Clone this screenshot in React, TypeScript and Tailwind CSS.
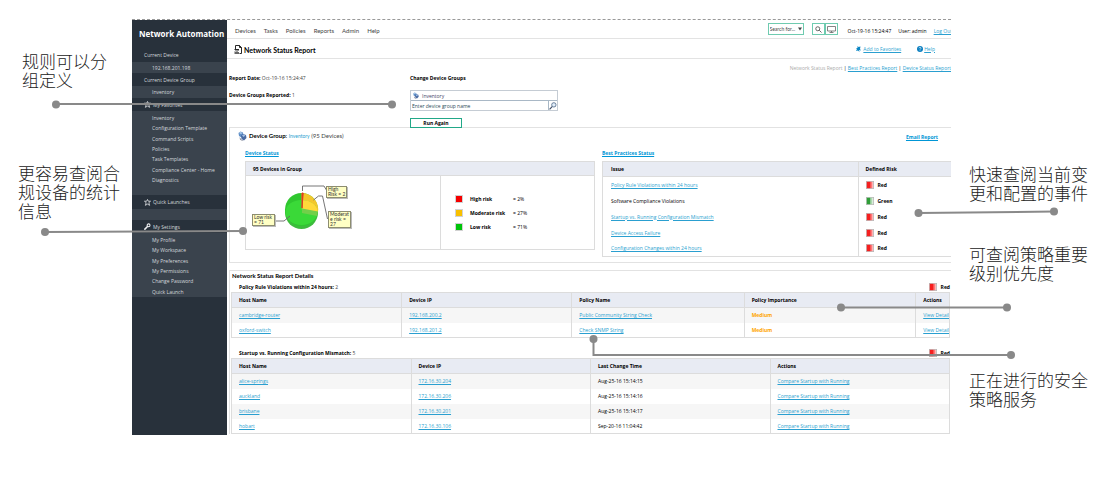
import React from "react";

const navLink = "text-[#d5d9dd] no-underline";
const link = "text-[#2a9fd0] underline";
const strongLink = "font-bold text-[#0096d6] underline";

function StarIcon() {
  return (
    <svg viewBox="0 0 12 12" className="h-[7px] w-[7px]" fill="none" stroke="#e8ebee" strokeWidth="1.3" aria-hidden="true">
      <path d="M6 .8l1.4 3h3.8L8.3 6.3l1.3 4.6L6 8.7l-3.600 2.200 1.300-4.600L.8 3.800h3.800z" />
    </svg>
  );
}

function WrenchIcon() {
  return (
    <svg viewBox="0 0 12 12" className="h-[7px] w-[7px]" aria-hidden="true">
      <path d="M1.500 10.500L6 6" stroke="#eef0f2" strokeWidth="2.600" strokeLinecap="round" />
      <circle cx="7.800" cy="4" r="2.500" fill="none" stroke="#eef0f2" strokeWidth="1.800" />
    </svg>
  );
}

function GroupIcon({ className }: { className: string }) {
  return (
    <svg viewBox="0 0 18 20" className={className} aria-hidden="true">
      <path d="M1 4l4-3 5 2 1 6-4 4-5-3z" fill="#5f8fc7" />
      <path d="M2 4l3-2 4 2-3 2z" fill="#b5d0ec" />
      <path d="M6 9l4-3 6 2 1 6-5 5-5-3z" fill="#4a6ba3" />
      <path d="M8 9l3-2 4 2-4 3z" fill="#a3c0e6" />
      <path d="M3 12l4 5 4 2-3 .500-4-2z" fill="#8a8fa0" />
    </svg>
  );
}

function ReportIcon() {
  return (
    <svg viewBox="0 0 16 18" className="h-[9px] w-[8px]" fill="none" stroke="#111" strokeWidth="1.800" aria-hidden="true">
      <path d="M3 8V1h8l4 4v12h-4" />
      <path d="M11 1v4h4" />
      <path d="M1 9h9M2 13l2-2 2 2 3-3" />
      <path d="M1 16h9" strokeWidth="2.600" />
    </svg>
  );
}

function RiskMark({ level }: { level: "Red" | "Green" }) {
  const red = level === "Red";
  return (
    <span className="flex items-center gap-[4px] font-bold text-black">
      <svg viewBox="0 0 16 16" className="h-[8px] w-[8px] shrink-0" aria-hidden="true">
        <rect x=".8" y=".8" width="14.400" height="14.400" fill={red ? "#ffb3b3" : "#d8ecd8"} stroke="#b9b9b9" strokeWidth="1.600" />
        <rect x="1.600" y="1.600" width="6.400" height="12.800" fill={red ? "#f51f1f" : "#2f9e38"} />
        <rect x="8" y="1.600" width="3.200" height="12.800" fill={red ? "#fb5454" : "#8fcb93"} />
      </svg>
      {level}
    </span>
  );
}

function NavHead({ children, icon, className }: { children: React.ReactNode; icon?: React.ReactNode; className: string }) {
  return (
    <h2 className={`flex items-center gap-[2px] bg-[#28313b] pl-[12px] ${className}`}>
      {icon}
      {children}
    </h2>
  );
}

function NavList({ items, className }: { items: string[]; className: string }) {
  return (
    <ul className={`grid auto-rows-fr items-center bg-[#3a434d] pl-[20px] ${className}`}>
      {items.map((t) => (
        <li key={t}>
          <a href="#" className={navLink}>{t}</a>
        </li>
      ))}
    </ul>
  );
}

function Sidebar() {
  return (
    <nav className="w-[95px] shrink-0 bg-[#28313b] text-[5px] leading-[6px] text-[#d5d9dd]">
      <h1 className="flex h-[28px] items-center pl-[7px] text-[8px] leading-[10px] font-bold whitespace-nowrap text-white">Network Automation</h1>
      <NavHead className="h-[14px]">Current Device</NavHead>
      <NavList className="h-[11px]" items={["192.168.201.198"]} />
      <NavHead className="h-[13px]">Current Device Group</NavHead>
      <NavList className="h-[12px]" items={["Inventory"]} />
      <NavHead className="h-[13px]" icon={<StarIcon />}>My Favorites</NavHead>
      <NavList
        className="h-[84px] pt-[2px] pb-[10px]"
        items={["Inventory", "Configuration Template", "Command Scripts", "Policies", "Task Templates", "Compliance Center - Home", "Diagnostics"]}
      />
      <NavHead className="h-[14px]" icon={<StarIcon />}>Quick Launches</NavHead>
      <div className="h-[11px] bg-[#3a434d]" />
      <NavHead className="h-[13px]" icon={<WrenchIcon />}>My Settings</NavHead>
      <NavList
        className="h-[64px] pt-[2px]"
        items={["My Profile", "My Workspace", "My Preferences", "My Permissions", "Change Password", "Quick Launch"]}
      />
    </nav>
  );
}

function TopBar() {
  return (
    <header className="flex h-[19px] items-center justify-between border-b border-[#e3e3e3] pl-[8px]">
      <div className="flex gap-[8px] pt-[4px] font-['Lato',sans-serif] text-[6px] text-[#444]">
        {["Devices", "Tasks", "Policies", "Reports", "Admin", "Help"].map((t) => (
          <a key={t} href="#">{t}</a>
        ))}
      </div>
      <div className="-mr-[1px] flex shrink-0 items-center">
        <label className="relative mr-[8px] block">
          <span className="sr-only">Search for</span>
          <select className="block h-[12px] w-[36px] appearance-none border border-[#6fcbb0] bg-white pl-[1px] font-['Lato',sans-serif] text-[5px] leading-[10px] text-[#444]">
            <option>Search for...</option>
          </select>
          <svg viewBox="0 0 8 6" className="pointer-events-none absolute top-[4px] right-[2px] h-[4px] w-[4px]" fill="#444" aria-hidden="true">
            <path d="M0 0h8L4 6z" />
          </svg>
        </label>
        <button aria-label="Search" className="flex h-[12px] w-[13px] items-center justify-center border border-[#6fcbb0]">
          <svg viewBox="0 0 14 14" className="h-[7px] w-[7px]" fill="none" stroke="#444" strokeWidth="1.600" aria-hidden="true">
            <circle cx="5.500" cy="5.500" r="4" />
            <path d="M8.500 8.500l4.500 4.500" />
          </svg>
        </button>
        <button aria-label="Console" className="flex h-[12px] w-[13px] items-center justify-center border border-[#6fcbb0]">
          <svg viewBox="0 0 18 14" className="h-[7px] w-[9px]" fill="none" stroke="#666" strokeWidth="1.600" aria-hidden="true">
            <path d="M1 1h16v9H1zM9 10v3M5 13h8" />
          </svg>
        </button>
        <span className="ml-[10px] pt-[4px] text-black">Oct-19-16 15:24:47</span>
        <span className="ml-[7px] pt-[4px] text-black">User: admin</span>
        <a href="#" className={`ml-[7px] pt-[4px] ${link}`}>Log Out</a>
      </div>
    </header>
  );
}

function TitleBar() {
  return (
    <div className="flex h-[20px] items-center justify-between border-b border-[#e3e3e3] pr-[16px] pl-[7px]">
      <h2 className="flex items-center gap-[2px] pt-[2px] font-['Lato',sans-serif] text-[7px] leading-[8px] font-bold text-black">
        <ReportIcon />
        Network Status Report
      </h2>
      <div className="flex items-center gap-[16px]">
        <a href="#" className={`flex items-center gap-[2px] ${link}`}>
          <svg viewBox="0 0 10 12" className="h-[6px] w-[5px]" fill="#0b86c4" aria-hidden="true">
            <path d="M3 0l2 2 4-1-1 5 2 3-4-1 1 4-3-3-4 1 2-4-2-2 3 0z" />
          </svg>
          Add to Favorites
        </a>
        <a href="#" className={`flex items-center gap-[1px] ${link}`}>
          <svg viewBox="0 0 12 12" className="h-[6px] w-[6px]" aria-hidden="true">
            <circle cx="6" cy="6" r="6" fill="#0b7fc0" />
            <path d="M4 4.500c0-2.500 4-2.500 4 0C8 6 6 5.800 6 7.300M6 8.500v1.300" fill="none" stroke="#fff" strokeWidth="1.300" />
          </svg>
          Help
        </a>
      </div>
    </div>
  );
}

function ReportForm() {
  return (
    <section className="grid h-[68px] grid-cols-[181px_1fr] pl-[2px]">
      <div className="pt-[16px]">
        <p className="h-[17px]"><b className="text-black">Report Date:</b> Oct-19-16 15:24:47</p>
        <p><b className="text-black">Device Groups Reported:</b> 1</p>
      </div>
      <div>
        <p className="flex h-[16px] items-center justify-end pt-[2px] whitespace-pre text-[#aaa]">
          Network Status Report<span className="text-black"> | </span>
          <a href="#" className={link}>Best Practices Report</a>
          <span className="text-black"> | </span>
          <a href="#" className={link}>Device Status Report</a>
        </p>
        <h3 className="font-bold text-black">Change Device Groups</h3>
        <div className="mt-[9px] w-[148px] border border-[#c5ccd4]">
          <div className="flex h-[9px] items-center gap-[3px] pl-[2px] text-[#446]">
            <GroupIcon className="h-[7px] w-[6px]" />
            Inventory
          </div>
          <div className="flex h-[10px] border-t border-[#a9b8c6]">
            <input
              aria-label="Device group name"
              placeholder="Enter device group name"
              className="min-w-0 flex-1 px-[1px] text-[5px] leading-[6px] placeholder:text-[#2c4a56]"
            />
            <button aria-label="Find group" className="flex w-[9px] items-center justify-center border-l border-[#a9b8c6]">
              <svg viewBox="0 0 14 14" className="h-[8px] w-[8px]" fill="none" aria-hidden="true">
                <circle cx="8.500" cy="5" r="3.800" fill="#e2eefa" stroke="#4a6484" strokeWidth="1.400" />
                <path d="M5.500 8L1 13" stroke="#3d4c66" strokeWidth="2" />
              </svg>
            </button>
          </div>
        </div>
        <button className="mt-[7px] block h-[10px] w-[52px] border border-[#22a888] font-bold text-black">Run Again</button>
      </div>
    </section>
  );
}

function Note({ children, className }: { children: React.ReactNode; className: string }) {
  return (
    <span className={`absolute border border-[#8d8d70] bg-[#ffffc4] px-[1px] font-['Lato',sans-serif] text-[5px] leading-[5px] whitespace-nowrap text-[#333] shadow-[1px_1px_0_#bbb] ${className}`}>
      {children}
    </span>
  );
}

function RiskPie() {
  return (
    <div className="relative h-full">
      <svg viewBox="0 0 194 73" className="h-[73px] w-[194px]" aria-hidden="true">
        <path d="M39 33.500v3a16.500 16.500 0 0 0 33 0v-3z" fill="#3dbb3d" />
        <circle cx="55.500" cy="33.500" r="16.500" fill="#2fc72f" />
        <path d="M55.500 33.500V17a16.500 16.500 0 0 1 16.500 19z" fill="#f3c62c" />
        <path d="M39.500 36a16 12 0 0 1 32 0 16 13 0 0 1-32 0z" fill="#3fdf3c" opacity=".75" />
        <path d="M56.500 33.500V24a16 12 0 0 1 15 10l.3 2z" fill="#ffd93a" />
        <path d="M56 32.500l16 3-1 4.500-15-3z" fill="#72cf4a" />
        <path d="M56 32V17h1.200z" fill="#e03a20" stroke="#e03a20" strokeWidth="1" />
        <g fill="none" stroke="#666" strokeWidth=".9">
          <path d="M56.500 15v-5h21.500l3 5" />
          <path d="M67.500 24l5-4h4l5 23" />
          <path d="M29 45h9l6-5" />
        </g>
      </svg>
      <Note className="top-[10px] left-[80px] w-[21px]">High<br />Risk = 2</Note>
      <Note className="top-[35px] left-[82px] w-[23px]">Moderat<br />e risk =<br />27</Note>
      <Note className="top-[38px] left-[6px] w-[23px]">Low risk<br />= 71</Note>
    </div>
  );
}

const risks = [
  { name: "High risk", share: "= 2%", box: "bg-[#f50000]" },
  { name: "Moderate risk", share: "= 27%", box: "bg-[#f8c000]" },
  { name: "Low risk", share: "= 71%", box: "bg-[#00c40a]" },
];

const issues: { name: string; level: "Red" | "Green"; plain?: boolean }[] = [
  { name: "Policy Rule Violations within 24 hours", level: "Red" },
  { name: "Software Compliance Violations", level: "Green", plain: true },
  { name: "Startup vs. Running Configuration Mismatch", level: "Red" },
  { name: "Device Access Failure", level: "Red" },
  { name: "Configuration Changes within 24 hours", level: "Red" },
];

function GroupPanel() {
  return (
    <section className="ml-[2px] h-[136px] border-y border-l border-[#e2e2e2]">
      <div className="flex h-[16px] items-center justify-between pr-[13px] pl-[8px]">
        <p className="flex items-center gap-[2px] font-['Lato',sans-serif] text-[6px]">
          <GroupIcon className="h-[10px] w-[9px]" />
          <span><b className="text-black">Device Group:</b> <a href="#" className="text-[5px] text-[#2a9fd0]">Inventory</a> (95 Devices)</span>
        </p>
        <a href="#" className={`pt-[2px] ${strongLink}`}>Email Report</a>
      </div>
      <div className="grid grid-cols-[350px_1fr] gap-[7px] pl-[15px]">
        <div>
          <h3 className="flex h-[17px] items-center"><a href="#" className={strongLink}>Device Status</a></h3>
          <div className="h-[89px] border border-[#dcdcdc]">
            <h4 className="flex h-[14px] items-center border-b border-[#dcdcdc] bg-[#e8ebf3] pl-[7px] font-bold text-black">95 Devices in Group</h4>
            <div className="grid h-[73px] grid-cols-[194px_1fr]">
              <RiskPie />
              <ul className="flex flex-col justify-center gap-[6px] border-l border-[#dcdcdc] pl-[15px]">
                {risks.map((r) => (
                  <li key={r.name} className="grid h-[8px] grid-cols-[14px_43px_1fr] items-center text-black">
                    <span className={`h-[6px] w-[6px] outline outline-[#aaa8] ${r.box}`} />
                    <b>{r.name}</b>
                    <span>{r.share}</span>
                  </li>
                ))}
              </ul>
            </div>
          </div>
        </div>
        <div>
          <h3 className="flex h-[17px] items-center"><a href="#" className={strongLink}>Best Practices Status</a></h3>
          <table className="w-full table-fixed border-collapse border-y border-l border-[#dcdcdc] text-left">
            <thead>
              <tr className="h-[15px] border-b border-[#dcdcdc] bg-[#e8ebf3] text-black">
                <th className="pl-[8px]">Issue</th>
                <th className="w-[93px] border-l border-[#dcdcdc] pl-[7px]">Defined Risk</th>
              </tr>
            </thead>
            <tbody>
              {issues.map((i) => (
                <tr key={i.name} className="h-[16px]">
                  <td className="pl-[8px] text-black">{i.plain ? i.name : <a href="#" className={link}>{i.name}</a>}</td>
                  <td className="border-l border-[#dcdcdc] pl-[7px]"><RiskMark level={i.level} /></td>
                </tr>
              ))}
            </tbody>
          </table>
        </div>
      </div>
    </section>
  );
}

const cell = "overflow-hidden whitespace-nowrap border-l border-[#dcdcdc] pl-[7px] py-0";

function DataTable({ widths, head, rows }: { widths: string[]; head: string[]; rows: React.ReactNode[][] }) {
  return (
    <table className="w-full table-fixed border-collapse border border-[#dcdcdc] text-left">
      <thead>
        <tr className="h-[15px] border-b border-[#dcdcdc] bg-[#e8ebf3] text-black">
          {head.map((h, i) => (
            <th key={h} className={`${cell} ${widths[i]}`}>{h}</th>
          ))}
        </tr>
      </thead>
      <tbody>
        {rows.map((r, n) => (
          <tr key={n} className="h-[15px] odd:bg-[#f6f6f6]">
            {r.map((c, i) => (
              <td key={i} className={cell}>{c}</td>
            ))}
          </tr>
        ))}
      </tbody>
    </table>
  );
}

const A = ({ children }: { children: React.ReactNode }) => <a href="#" className={link}>{children}</a>;
const medium = <b className="text-[#ffa500]">Medium</b>;

const violations = [
  ["cambridge-router", "192.168.200.2", "Public Community String Check"],
  ["oxford-switch", "192.168.201.2", "Check SNMP String"],
];

const mismatches = [
  ["alice-springs", "172.16.30.204", "Aug-25-16 15:14:15"],
  ["auckland", "172.16.30.206", "Aug-25-16 15:14:16"],
  ["brisbane", "172.16.30.201", "Aug-25-16 15:14:17"],
  ["hobart", "172.16.30.106", "Sep-20-16 11:04:42"],
];

function Details() {
  return (
    <section className="mt-[7px] ml-[2px] border-t border-l border-[#e2e2e2] pr-[1px] pl-[1px]">
      <h3 className="flex h-[10px] items-center pl-[1px] font-['Lato',sans-serif] text-[6px] font-bold text-black">Network Status Report Details</h3>
      <div className="flex h-[11px] items-center justify-between pl-[8px]">
        <p><b className="text-black">Policy Rule Violations within 24 hours:</b> 2</p>
        <RiskMark level="Red" />
      </div>
      <DataTable
        widths={["w-[23.7%]", "w-[23.7%]", "w-[24%]", "w-[23.9%]", "w-auto"]}
        head={["Host Name", "Device IP", "Policy Name", "Policy Importance", "Actions"]}
        rows={violations.map(([h, ip, p]) => [<A>{h}</A>, <A>{ip}</A>, <A>{p}</A>, medium, <A>View Details</A>])}
      />
      <div className="mt-[9px] flex h-[11px] items-center justify-between pl-[8px]">
        <p><b className="text-black">Startup vs. Running Configuration Mismatch:</b> 5</p>
        <RiskMark level="Red" />
      </div>
      <DataTable
        widths={["w-1/4", "w-1/4", "w-1/4", "w-1/4"]}
        head={["Host Name", "Device IP", "Last Change Time", "Actions"]}
        rows={mismatches.map(([h, ip, t]) => [<A>{h}</A>, <A>{ip}</A>, <span className="text-black">{t}</span>, <A>Compare Startup with Running</A>])}
      />
    </section>
  );
}

function Callouts() {
  return (
    <svg viewBox="0 0 1116 484" className="pointer-events-none absolute top-0 left-0 h-[484px] w-[1116px]" fill="none" stroke="#898989" strokeWidth="2" aria-hidden="true">
      <path d="M56 104H392M45 232L243 231M918 213L1054 211.500M841 307.500H1007M593.500 339V355H1011" />
      <g fill="#898989" stroke="none">
        <circle cx="56" cy="104.500" r="4" />
        <circle cx="392" cy="104.500" r="4" />
        <circle cx="45" cy="232" r="4" />
        <circle cx="243" cy="231" r="4" />
        <circle cx="918.500" cy="213" r="4" />
        <circle cx="1054" cy="211.500" r="4" />
        <circle cx="841" cy="307.500" r="4" />
        <circle cx="1007" cy="307.500" r="4" />
        <circle cx="593.500" cy="339" r="4" />
        <circle cx="1011" cy="355" r="4" />
      </g>
    </svg>
  );
}

export default function App() {
  return (
    <div className="relative flex items-start overflow-hidden bg-white pb-[49px] font-['Open_Sans','Noto_Sans_CJK_SC',sans-serif] text-[5px] leading-[6px] text-[#444]">
      <aside className="w-[132px] shrink-0 pt-[51px] font-['Noto_Sans_CJK_SC',sans-serif] text-[17px] leading-[19px] font-light text-[#222]">
        <p className="pl-[22px]">规则可以分<br />组定义</p>
        <p className="mt-[74px] pl-[18px]">更容易查阅合<br />规设备的统计<br />信息</p>
      </aside>
      <div className="mt-[19px] flex h-[416px] min-w-0 flex-1 overflow-hidden border-t border-dashed border-[#999]">
        <Sidebar />
        <main className="min-w-0 flex-1">
          <TopBar />
          <TitleBar />
          <ReportForm />
          <GroupPanel />
          <Details />
        </main>
      </div>
      <aside className="w-[165px] shrink-0 pt-[164px] pl-[18px] font-['Noto_Sans_CJK_SC',sans-serif] text-[17px] leading-[19px] font-light text-[#222]">
        <p>快速查阅当前变<br />更和配置的事件</p>
        <p className="mt-[42px]">可查阅策略重要<br />级别优先度</p>
        <p className="mt-[88px]">正在进行的安全<br />策略服务</p>
      </aside>
      <Callouts />
    </div>
  );
}
